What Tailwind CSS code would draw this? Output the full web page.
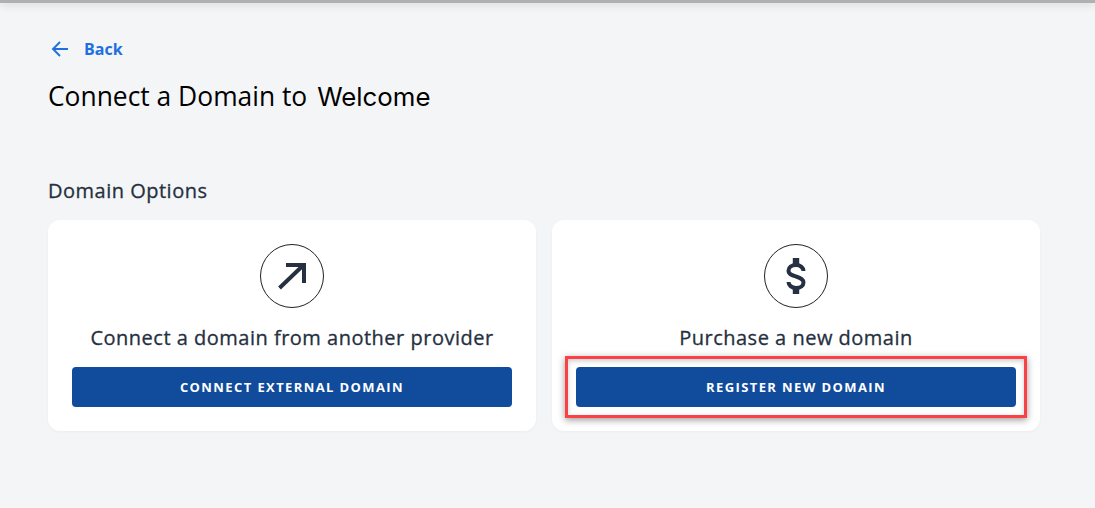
<!DOCTYPE html>
<html lang="en">
  <head>
    <meta charset="UTF-8" />
    <meta name="viewport" content="width=device-width, initial-scale=1.0" />
    <title>Connect a Domain</title>
    <script src="https://cdn.jsdelivr.net/npm/@tailwindcss/browser@4"></script>
  </head>
  <body class="bg-[#f4f5f7] h-[508px] overflow-hidden font-['Open_Sans',sans-serif]">
    <!-- Top edge shadow -->
    <div class="h-[3px] bg-[#b0b0b0] shadow-[0_1px_8px_rgba(0,0,0,0.22)]"></div>

    <main class="w-[992px] ml-[48px] pt-[36px]">
      <!-- Back link -->
      <a href="#" class="flex items-center h-[20px] ml-[3px] text-[#1f6fe0] text-base leading-[18px] font-bold">
        <svg width="18" height="18" viewBox="0 0 18 18" fill="none" stroke="currentColor" stroke-width="1.9">
          <path d="M17 9H2M9 2L2 9l7 7" />
        </svg>
        <span class="ml-[15px] -mt-[1px]">Back</span>
      </a>

      <h1 class="mt-[19px] h-[36px] text-[26.400px] leading-[36px] text-black font-normal flex items-baseline">
        <span>Connect a Domain to</span>
        <span class="ml-[10px] text-[25.800px] font-normal font-['Inter',sans-serif]">Welcome</span>
      </h1>

      <h2 class="mt-[63px] h-[28px] text-xl leading-[28px] font-normal tracking-[0.5px] [-webkit-text-stroke:0.3px_#253040] text-[#253040]">Domain Options</h2>

      <div class="mt-[15px] grid grid-cols-2 gap-4">
        <!-- External domain -->
        <section class="h-[211px] bg-white rounded-xl shadow-[0_1px_3px_rgba(0,0,0,0.04)] flex flex-col items-center pt-[24px] px-6">
          <div class="w-[64px] h-[64px] rounded-full border border-[#222] flex items-center justify-center">
            <svg width="32" height="32" viewBox="0 0 32 32" fill="none" stroke="#253040" stroke-width="4">
              <path d="M3.500 28L27 5.500M10 5h18v18" />
            </svg>
          </div>
          <h3 class="mt-[16px] h-[28px] text-xl leading-[28px] font-normal tracking-[0.5px] [-webkit-text-stroke:0.3px_#253040] text-[#253040]">Connect a domain from another provider</h3>
          <button class="mt-[15px] pt-[1px] w-full h-[40px] rounded bg-[#114b9b] text-white text-[13px] font-bold tracking-[1.4px]">CONNECT EXTERNAL DOMAIN</button>
        </section>

        <!-- New domain -->
        <section class="relative h-[211px] bg-white rounded-xl shadow-[0_1px_3px_rgba(0,0,0,0.04)] flex flex-col items-center pt-[24px] px-6">
          <div class="w-[64px] h-[64px] rounded-full border border-[#222] flex items-center justify-center">
            <svg width="24" height="38" viewBox="0 0 24 38" fill="none" stroke="#253040" stroke-width="4">
              <path d="M19.500 14c0-3-3-6-7.500-6s-7.500 2.500-7.500 5.500c0 4 4 5 7.500 6s7.500 2.500 7.500 6c0 3-3 5.500-7.500 5.500s-7.500-3-7.500-6" />
              <path d="M12 1v6M12 31v6" stroke-width="6.400" />
            </svg>
          </div>
          <h3 class="mt-[16px] h-[28px] text-xl leading-[28px] font-normal tracking-[0.5px] [-webkit-text-stroke:0.3px_#253040] text-[#253040]">Purchase a new domain</h3>
          <button class="mt-[15px] pt-[1px] w-full h-[40px] rounded bg-[#114b9b] text-white text-[13px] font-bold tracking-[1.4px]">REGISTER NEW DOMAIN</button>
          <!-- Highlight box -->
          <div class="absolute left-[13px] top-[136px] w-[462px] h-[62px] border-[3px] border-[#fb4146] shadow-[0_2px_7px_rgba(0,0,0,0.4),inset_0_2px_5px_rgba(0,0,0,0.2)]"></div>
        </section>
      </div>
    </main>
  </body>
</html>
